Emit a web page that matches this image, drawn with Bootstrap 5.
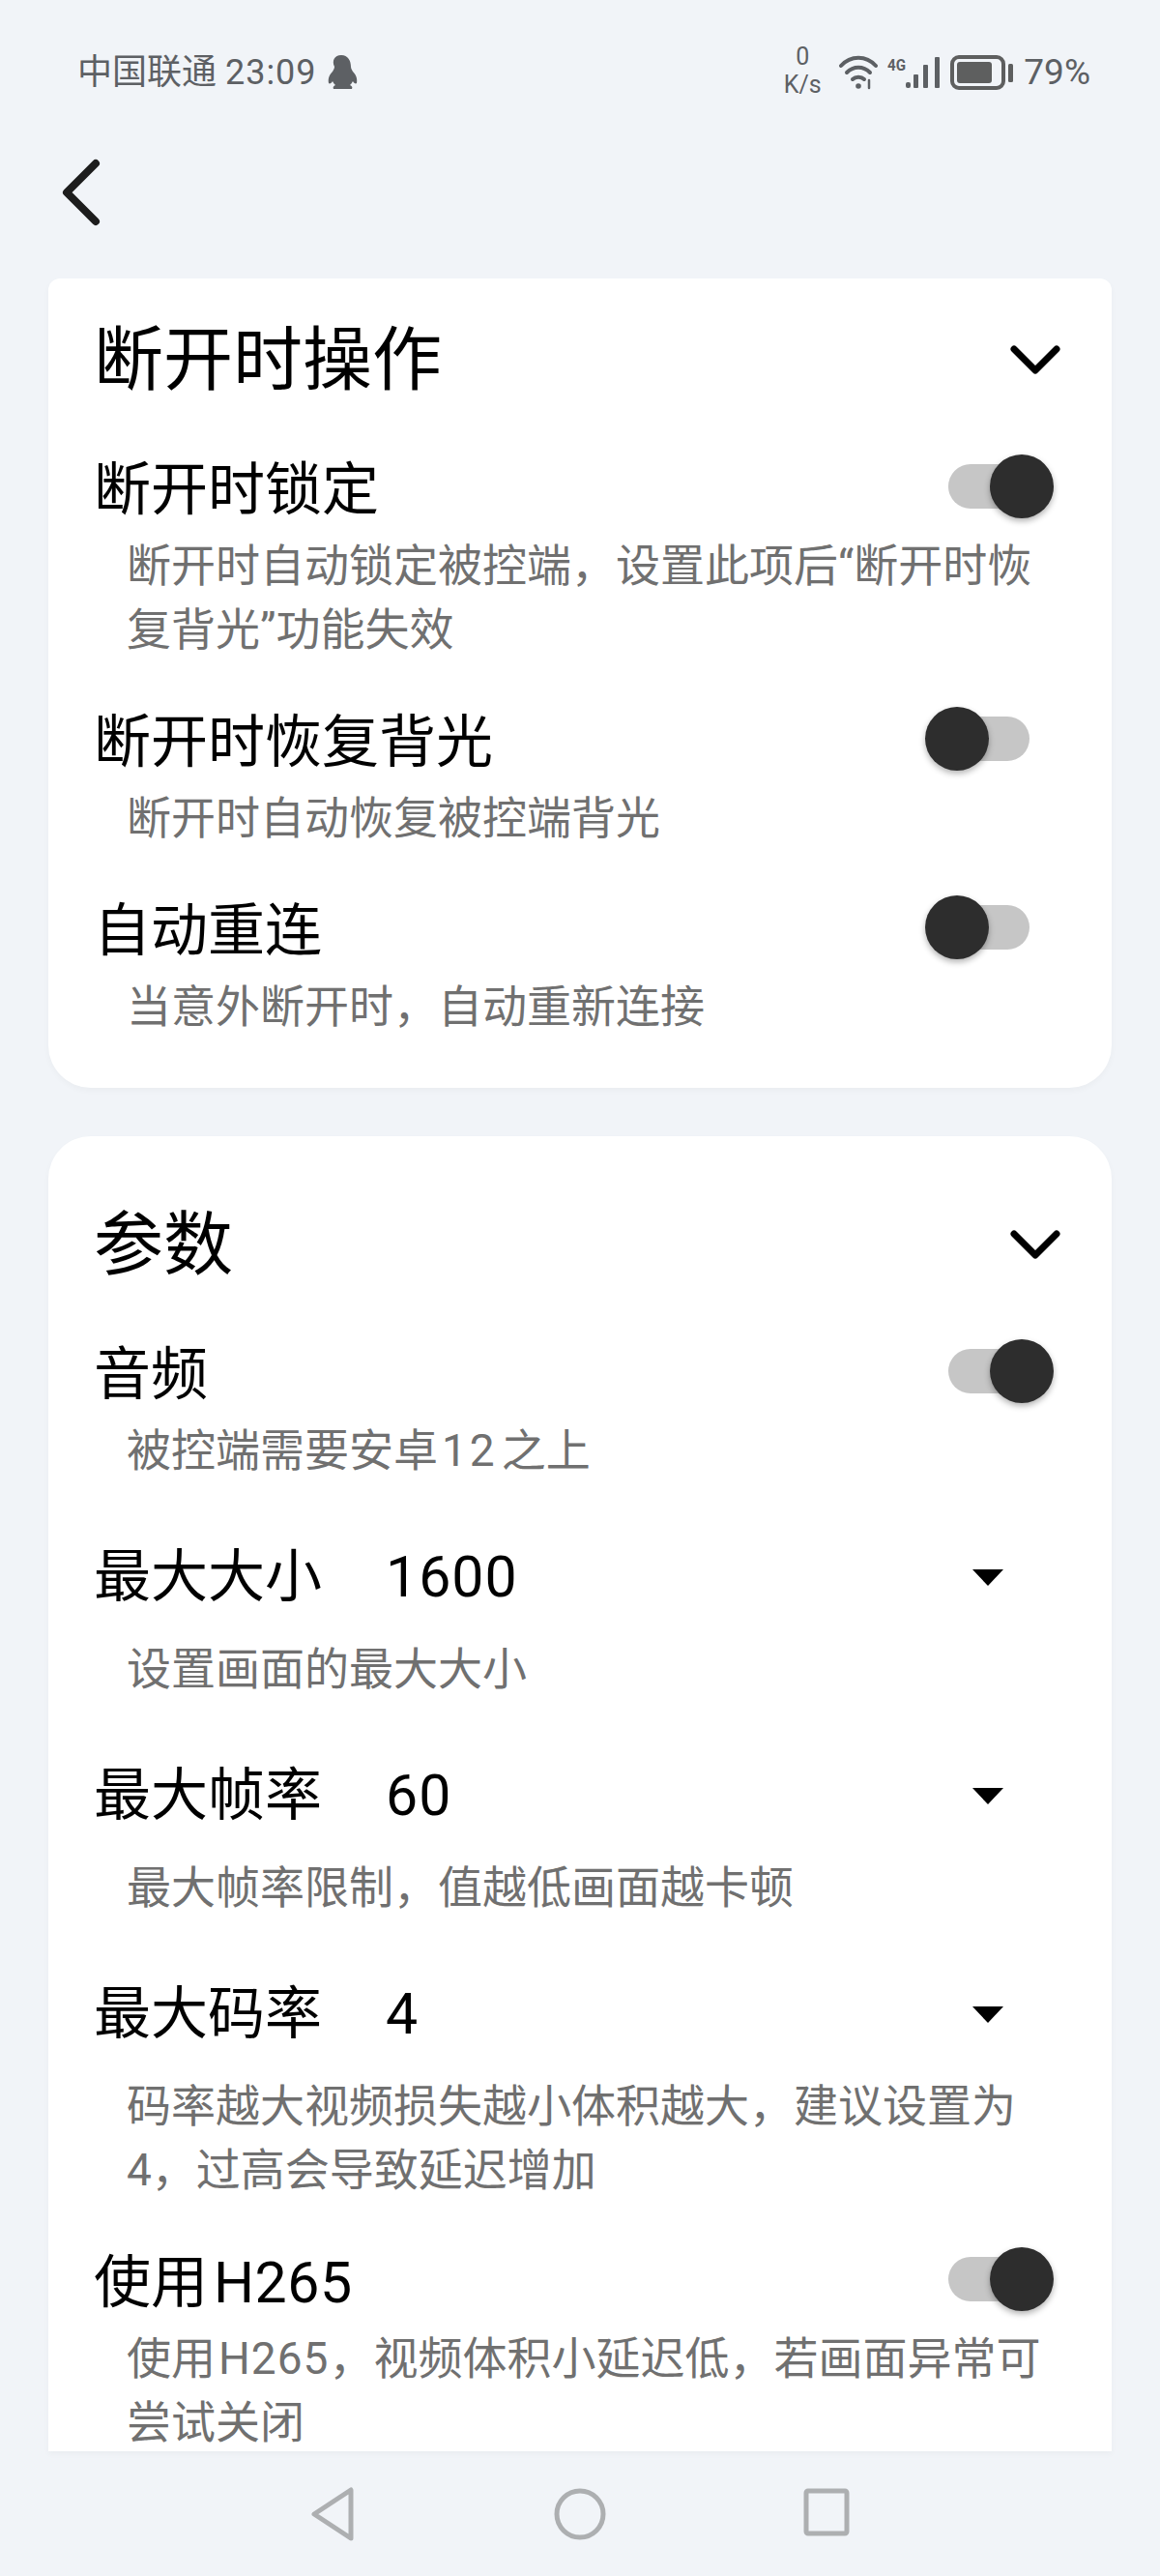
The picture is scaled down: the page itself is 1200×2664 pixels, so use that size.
<!DOCTYPE html>
<html lang="zh-CN">
<head>
  <meta charset="UTF-8" />
  <meta name="viewport" content="width=device-width, initial-scale=1.0"/>
  <title>设置</title>
  <link href="https://cdn.jsdelivr.net/npm/bootstrap@5.3.0/dist/css/bootstrap.min.css" rel="stylesheet">
  <style>
    html, body { height: 2664px; overflow: hidden; }
    body {
      background-color: #f1f4f8;
      font-family: "Roboto", "Noto Sans CJK SC", sans-serif;
      color: #000;
    }
    .status-bar { height: 146px; padding: 46px 72px 0 80px; color: #5d6064; }
    .status-left { font-size: 36px; line-height: 58px; }
    .clock { letter-spacing: 1px; }
    .speed { font-size: 25px; line-height: 29px; text-align: center; width: 44px; margin: -4px 16px 0 0; }
    .sig-icon { margin-left: 10px; }
    .batt-icon { margin-left: 11px; }
    .pct { font-size: 37px; line-height: 58px; margin-left: 10px; }
    .back-row { height: 142px; padding-left: 62px; padding-top: 16px; }
    .scroll-area { height: 2256px; overflow: hidden; padding: 0 50px 10px; }
    .panel { background: #fff; box-shadow: 0 3px 6px rgba(0,0,0,.03); }
    .panel-one { height: 837px; border-radius: 12px 12px 44px 44px; padding: 0 52px 0 47px; margin-bottom: 50px; }
    .panel-two { border-radius: 44px 44px 0 0; height: 1360px; padding: 0 52px 0 47px; }
    .panel-head { font-size: 72px; line-height: 90px; }
    .panel-one .panel-head { padding-top: 40px; }
    .panel-two .panel-head { padding-top: 68px; }
    .item-name { font-size: 59px; line-height: 72px; }
    .item-note { font-size: 46px; line-height: 66px; color: #707070; padding-left: 34px; margin-top: 9px; }
    .item-value { font-size: 59px; line-height: 72px; margin-left: 66px; letter-spacing: 1px; }
    .tgl { position: relative; display: block; width: 84px; height: 46px; border-radius: 23px; background: #c6c6c6; margin: 0 33px 8px 0; }
    .tgl::after {
      content: ""; position: absolute; top: -10px; width: 66px; height: 66px; border-radius: 50%;
      background: #2d2d2d; box-shadow: 0 3px 6px rgba(0,0,0,.3);
    }
    .tgl-on::after { left: 43px; }
    .tgl-off::after { left: -24px; }
    .caret-down { width: 0; height: 0; border-left: 16px solid transparent; border-right: 16px solid transparent; border-top: 17px solid #000; margin-right: 60px; }
    .first-row { margin-top: 53px; }
    .next-row { margin-top: 48px; }
    .select-row { margin-top: 62px; }
    .select-note { margin-top: 26px; }
    .num-note { letter-spacing: 3px; margin: 0 4px; }
    .num-h265 { letter-spacing: 1px; margin-left: 3px; }
    .name-h265 { letter-spacing: .5px; margin-left: 6px; }
    .nav-keys { height: 122px; padding-top: 28px; }
    .nav-key { width: 255px; display: flex; justify-content: center; }
  </style>
</head>
<body>
  <!-- status bar -->
  <div class="status-bar d-flex justify-content-between align-items-start">
    <div class="status-left d-flex align-items-center">
      <span>中国联通 <span class="clock">23:09</span></span>
      <svg class="ms-2" width="34" height="36" viewBox="0 0 34 36"><path fill="#5d6064" d="M17 0c7 0 10 6 10 12 0 2 1 3 2 5 3 3 5 7 4 12-1 1-3 0-4-2-1 2-2 3-3 4 2 1 3 2 2 4H9c-1-2 0-3 2-4-1-1-2-2-3-4-1 2-3 3-4 2-1-5 1-9 4-12 1-2 2-3 2-5C7 6 10 0 17 0z"/></svg>
    </div>
    <div class="d-flex align-items-center">
      <div class="speed"><div>0</div><div>K/s</div></div>
      <svg width="40" height="36" viewBox="0 0 40 36" fill="none" stroke="#5d6064" stroke-width="4" stroke-linecap="round">
        <path d="M2 11c10-11 26-11 36 0"/><path d="M8 18c7-7 17-7 24 0"/><path d="M14 25c3-3 9-3 12 0"/><circle cx="20" cy="32" r="2.8" fill="#5d6064" stroke="none"/>
        <path d="M31 26v8" stroke-width="2.5"/>
      </svg>
      <svg class="sig-icon" width="54" height="34" viewBox="0 0 54 34">
        <text x="0" y="15" font-family="Roboto" font-size="17" font-weight="700" fill="#5d6064" textLength="19" lengthAdjust="spacingAndGlyphs">4G</text>
        <g fill="#5d6064"><rect x="19" y="27" width="5" height="6" rx="2"/><rect x="27" y="19" width="5" height="14" rx="1"/><rect x="37" y="9" width="5" height="24" rx="1"/><rect x="49" y="1" width="5" height="32" rx="1"/></g>
      </svg>
      <svg class="batt-icon" width="66" height="36" viewBox="0 0 66 36" fill="none">
        <rect x="2" y="2" width="53" height="32" rx="7" stroke="#5e5f5f" stroke-width="4"/>
        <rect x="7" y="7" width="36" height="22" rx="3" fill="#5e5f5f"/>
        <rect x="60" y="9" width="5" height="19" rx="1.5" fill="#5e5f5f"/>
      </svg>
      <span class="pct">79%</span>
    </div>
  </div>

  <!-- back -->
  <div class="back-row">
    <svg width="44" height="74" viewBox="0 0 44 74" fill="none" stroke="#1d1d1d" stroke-width="8" stroke-linecap="round" stroke-linejoin="round"><path d="M37 7 7 37l30 30"/></svg>
  </div>

  <div class="scroll-area">
    <!-- 断开时操作 -->
    <div class="panel panel-one">
      <div class="panel-head d-flex justify-content-between align-items-center">
        <span>断开时操作</span>
        <svg width="54" height="34" viewBox="0 0 54 34" fill="none" stroke="#000" stroke-width="7" stroke-linecap="round" stroke-linejoin="round"><path d="M5 5l22 22L49 5"/></svg>
      </div>
      <div class="d-flex justify-content-between align-items-center first-row">
        <span class="item-name">断开时锁定</span><span class="tgl tgl-on"></span>
      </div>
      <div class="item-note">断开时自动锁定被控端，设置此项后“断开时恢<br>复背光”功能失效</div>
      <div class="d-flex justify-content-between align-items-center next-row">
        <span class="item-name">断开时恢复背光</span><span class="tgl tgl-off"></span>
      </div>
      <div class="item-note">断开时自动恢复被控端背光</div>
      <div class="d-flex justify-content-between align-items-center next-row">
        <span class="item-name">自动重连</span><span class="tgl tgl-off"></span>
      </div>
      <div class="item-note">当意外断开时，自动重新连接</div>
    </div>

    <!-- 参数 -->
    <div class="panel panel-two">
      <div class="panel-head d-flex justify-content-between align-items-center">
        <span>参数</span>
        <svg width="54" height="34" viewBox="0 0 54 34" fill="none" stroke="#000" stroke-width="7" stroke-linecap="round" stroke-linejoin="round"><path d="M5 5l22 22L49 5"/></svg>
      </div>
      <div class="d-flex justify-content-between align-items-center first-row">
        <span class="item-name">音频</span><span class="tgl tgl-on"></span>
      </div>
      <div class="item-note">被控端需要安卓<span class="num-note">12</span>之上</div>
      <div class="d-flex align-items-center select-row">
        <span class="item-name">最大大小</span><span class="item-value flex-grow-1">1600</span><span class="caret-down"></span>
      </div>
      <div class="item-note select-note">设置画面的最大大小</div>
      <div class="d-flex align-items-center select-row">
        <span class="item-name">最大帧率</span><span class="item-value flex-grow-1">60</span><span class="caret-down"></span>
      </div>
      <div class="item-note select-note">最大帧率限制，值越低画面越卡顿</div>
      <div class="d-flex align-items-center select-row">
        <span class="item-name">最大码率</span><span class="item-value flex-grow-1">4</span><span class="caret-down"></span>
      </div>
      <div class="item-note select-note">码率越大视频损失越小体积越大，建议设置为<br>4，过高会导致延迟增加</div>
      <div class="d-flex justify-content-between align-items-center next-row">
        <span class="item-name">使用<span class="name-h265">H265</span></span><span class="tgl tgl-on"></span>
      </div>
      <div class="item-note">使用<span class="num-h265">H265</span>，视频体积小延迟低，若画面异常可<br>尝试关闭</div>
    </div>
  </div>

  <!-- android nav keys -->
  <div class="nav-keys d-flex justify-content-center align-items-start">
    <div class="nav-key"><svg width="52" height="56" viewBox="0 0 52 56" fill="none" stroke="#adafb1" stroke-width="5" stroke-linejoin="round"><path d="M44 3v50L6 28z"/></svg></div>
    <div class="nav-key"><svg width="56" height="56" viewBox="0 0 56 56" fill="none" stroke="#adafb1" stroke-width="5"><circle cx="28" cy="28" r="24"/></svg></div>
    <div class="nav-key"><svg width="50" height="52" viewBox="0 0 50 52" fill="none" stroke="#adafb1" stroke-width="5" stroke-linejoin="round"><rect x="4" y="4" width="42" height="44" rx="2"/></svg></div>
  </div>

  <script src="https://cdn.jsdelivr.net/npm/bootstrap@5.3.0/dist/js/bootstrap.bundle.min.js"></script>
</body>
</html>
